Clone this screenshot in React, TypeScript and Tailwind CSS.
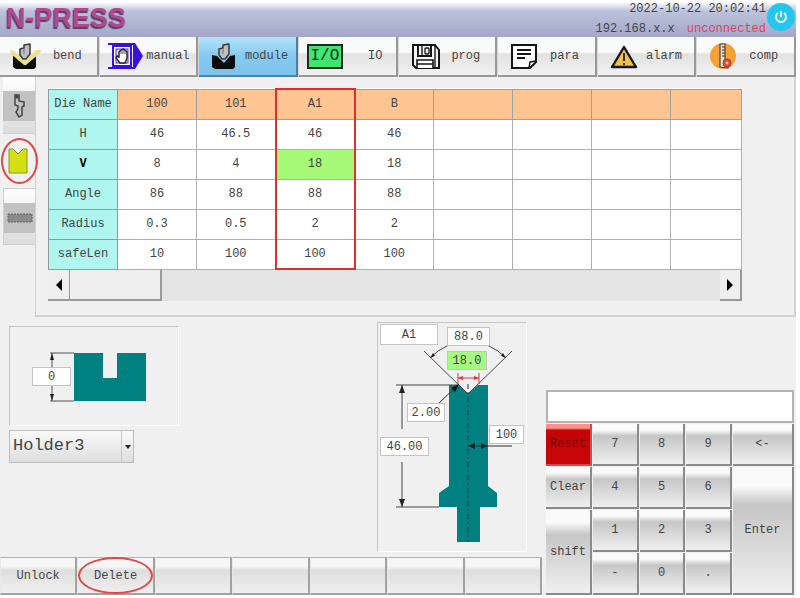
import React, { useState } from 'react';

const PunchIcon: React.FC<{ bent?: boolean }> = ({ bent }) => (
  <svg width="30" height="28" viewBox="0 0 30 28" overflow="visible">
    <path d="M1 13 L6 14 L13 21 L19 14 L24 13 V25 L22 27 H4 L1 25 Z" fill="#0c0c0c" />
    {bent && <path d="M-2 8 L2 9 L13 19 L24 8 L29 8 L28 11 L14 23 L12 23 L-1 12 Z" fill="#eee08a" />}
    <path d="M12 3 L18 2 V12 L14 17 L11 17 L8 13 V7 L12 6 Z" fill="#bdbdc2" stroke="#3a3a3a" strokeWidth="1.5" strokeLinejoin="round" />
    <path d="M12 6 V12" stroke="#777" strokeWidth="1" />
  </svg>
);

const ManualIcon = () => (
  <svg width="36" height="28" viewBox="0 0 36 28">
    <path d="M25 1 H27 L35 14 L27 27 H25 Z" fill="#3a10dc" />
    <path d="M0 2 H26 M0 26 H26" stroke="#3a10dc" strokeWidth="2" />
    <rect x="5" y="4" width="18" height="20" fill="#fff" stroke="#3a10dc" strokeWidth="2" />
    <rect x="8" y="7" width="12" height="14" fill="#dcd8f0" stroke="#4c3a9c" strokeWidth="1" />
    <path d="M12 21 L8 16 L9 14 L11 15 V10 L13 8 L15 7 L17 8 L19 10 V16 L17 21 Z" fill="#fff" stroke="#222" strokeWidth="1.4" />
    <path d="M13 9 V12 M15 8 V12 M17 9 V12" stroke="#222" strokeWidth="0.8" />
  </svg>
);

const IoIcon = () => (
  <span className="flex h-[25px] w-9 items-center justify-center border-2 border-[#1c2a20] bg-[#3ee673] font-['Liberation_Mono',monospace] text-base leading-none text-[#0c2c16]">
    I/O
  </span>
);

const ProgIcon = () => (
  <svg width="30" height="28" viewBox="0 0 30 28" fill="none" stroke="#161616" strokeWidth="2">
    <path d="M2 3 H24 L28 8 V26 H5 L2 23 Z" fill="#f4f4f4" />
    <path d="M24 4 V25" strokeWidth="1.4" />
    <path d="M7 3 V14 H20 V3" />
    <path d="M11 3 V13" strokeWidth="1.4" />
    <rect x="14" y="6" width="4" height="6" rx="1" strokeWidth="1.3" />
    <path d="M6 26 V18 H22 V26 M6 22 H22" fill="#fff" strokeWidth="1.6" />
  </svg>
);

const ParaIcon = () => (
  <svg width="28" height="28" viewBox="0 0 28 28" fill="none" stroke="#161616" strokeWidth="2">
    <path d="M2 3 H26 V20 L20 26 H2 Z" fill="#fff" />
    <path d="M26 19 L20 20 L19 26" strokeWidth="1.5" />
    <path d="M7 8 H21 M7 12 H21 M7 16 H15" strokeWidth="1.8" />
  </svg>
);

const AlarmIcon = () => (
  <svg width="28" height="28" viewBox="0 0 28 28">
    <path d="M14 5 L26 25 H2 Z" fill="#f0c04a" stroke="#161616" strokeWidth="2.4" strokeLinejoin="round" />
    <path d="M14 11 V19" stroke="#3c2c10" strokeWidth="2" />
    <circle cx="14" cy="22" r="1.2" fill="#3c2c10" />
  </svg>
);

const CompIcon = () => (
  <svg width="28" height="28" viewBox="0 0 28 28">
    <circle cx="14" cy="14" r="13" fill="#f5a136" />
    <path d="M11 2 H16 V18 L19 20 V26 L11 25 Z" fill="#e4dccb" stroke="#5c4030" strokeWidth="1.2" />
    <path d="M13 5 H16 M13 8 H16 M13 11 H16 M13 14 H16" stroke="#4a3a2a" strokeWidth="1" />
    <circle cx="18" cy="21" r="4" fill="#d8503c" stroke="#a8382c" strokeWidth="1" />
    <circle cx="18" cy="21" r="1.4" fill="#f0c8b8" />
  </svg>
);

const menu: { id: string; icon: React.ReactNode; wide?: boolean }[] = [
  { id: 'bend', icon: <PunchIcon bent /> },
  { id: 'manual', icon: <ManualIcon /> },
  { id: 'module', icon: <PunchIcon /> },
  { id: 'IO', icon: <IoIcon />, wide: true },
  { id: 'prog', icon: <ProgIcon /> },
  { id: 'para', icon: <ParaIcon /> },
  { id: 'alarm', icon: <AlarmIcon /> },
  { id: 'comp', icon: <CompIcon /> },
];

const rows: { label: string; values: string[] }[] = [
  { label: 'H', values: ['46', '46.5', '46', '46'] },
  { label: 'V', values: ['8', '4', '18', '18'] },
  { label: 'Angle', values: ['86', '88', '88', '88'] },
  { label: 'Radius', values: ['0.3', '0.5', '2', '2'] },
  { label: 'safeLen', values: ['10', '100', '100', '100'] },
];

const dieNames = ['100', '101', 'A1', 'B', '', '', '', ''];
const SELECTED = 2;

const keys: { label: string; area?: string }[] = [
  { label: 'Reset' }, { label: '7' }, { label: '8' }, { label: '9' }, { label: '<-' },
  { label: 'Clear' }, { label: '4' }, { label: '5' }, { label: '6' }, { label: 'Enter', area: 'row-span-3' },
  { label: 'shift', area: 'row-span-2' }, { label: '1' }, { label: '2' }, { label: '3' },
  { label: '-' }, { label: '0' }, { label: '.' },
];

const Field: React.FC<{ label: string; value: string; className: string }> = ({ label, value, className }) => (
  <input
    aria-label={label}
    defaultValue={value}
    className={`absolute border border-[#c4c4c4] p-0 text-center text-xs ${className}`}
  />
);

const HolderDrawing = () => (
  <div className="relative h-[100px] w-[170px] border border-b-white border-l-[#c6c6c6] border-r-white border-t-[#c6c6c6]">
    <svg width="168" height="98" viewBox="0 0 168 98">
      <path d="M64 26 H93 V51 H107 V26 H136 V74 H64 Z" fill="#008080" />
      <path d="M40 26 H64 M40 74 H64 M42 26 V74" stroke="#555" fill="none" />
      <path d="M42 26 L40 33 H44 Z M42 74 L40 67 H44 Z" fill="#222" />
    </svg>
    <Field label="Holder height" value="0" className="left-[22px] top-[40px] h-[19px] w-[39px] bg-white" />
  </div>
);

const DieDrawing = () => (
  <div className="relative h-[230px] w-[150px] border border-b-white border-l-[#c6c6c6] border-r-white border-t-[#c6c6c6]">
    <svg width="148" height="228" viewBox="0 0 148 228" fill="none">
      <path
        d="M71 62 H81 L90 71 L100 62 H110 V163 L119 170 V184 H102 V219 H79 V184 H61 V170 L71 163 Z"
        fill="#008080"
      />
      <path d="M46 28 L90 71 L134 28" stroke="#444" />
      <path d="M52 35 A52 52 0 0 1 128 35" stroke="#444" />
      <path d="M52 35 L55 30 L57 33 Z M128 35 L125 30 L123 33 Z" fill="#222" />
      <path d="M90 61 V219" stroke="#1c3c3c" strokeDasharray="5 3 2 3" />
      {/* height */}
      <path d="M18 62 H80 M18 184 H61 M24 62 V106 M24 139 V184" stroke="#444" />
      <path d="M24 62 L21 70 H27 Z M24 184 L21 176 H27 Z" fill="#222" />
      {/* radius */}
      <path d="M80 62 L60 81" stroke="#333" />
      <path d="M81 61 L73 65 L77 69 Z" fill="#111" />
      {/* opening */}
      <path d="M80 50 V61 M101 50 V61 M80 55 H101" stroke="#e03838" />
      <path d="M80 55 L85 53 V57 Z M101 55 L96 53 V57 Z" fill="#e03838" />
      <path d="M90 123 H134" stroke="#333" />
      <path d="M90 123 L97 120 V126 Z M110 123 L103 120 V126 Z" fill="#222" />
    </svg>
    <Field label="Die name" value="A1" className="left-[2px] top-[1px] h-[21px] w-[58px] bg-white" />
    <Field label="Angle" value="88.0" className="left-[69px] top-[4px] h-[19px] w-[43px] bg-white" />
    <Field label="V opening" value="18.0" className="left-[69px] top-[28px] h-[19px] w-[40px] bg-[#a6f985]" />
    <Field label="Radius" value="2.00" className="left-[29px] top-[80px] h-[19px] w-[38px] bg-white" />
    <Field label="Safe length" value="100" className="left-[111px] top-[102px] h-[19px] w-[35px] bg-white" />
    <Field label="Height" value="46.00" className="left-[2px] top-[114px] h-[19px] w-[49px] bg-white" />
  </div>
);

const App: React.FC = () => {
  const [page, setPage] = useState('module');
  const [display, setDisplay] = useState('');

  const pressKey = (label: string) => {
    if (/^[0-9.-]$/.test(label)) setDisplay(display + label);
    if (label === '<-') setDisplay(display.slice(0, -1));
    if (label === 'Clear') setDisplay('');
  };

  return (
    <div className="min-h-screen bg-white pr-1 font-['Liberation_Mono',monospace] text-xs text-[#444]">
      <div className="bg-[#f0f0f0]">
        <header className="flex h-[37px] items-center justify-between bg-linear-to-b from-white from-5% via-[#bcc2da] via-30% to-[#a4a7c8] pl-[6px] pr-px">
          <h1 className="font-['Liberation_Sans',sans-serif] text-[27px] font-bold leading-none text-[#b04a8c] [text-shadow:-1px_2px_1px_#5c3c68]">
            N-PRESS
          </h1>
          <div className="flex items-center gap-px">
            <div className="text-right leading-5">
              <p>2022-10-22 20:02:41</p>
              <p>
                192.168.x.x<span className="pl-3 text-[#e0435c]">unconnected</span>
              </p>
            </div>
            <button aria-label="Power" className="mb-1 flex size-7 items-center justify-center rounded-full bg-[#22c6ee]">
              <svg width="16" height="16" viewBox="0 0 16 16" fill="none" stroke="#e8fbff" strokeWidth="2">
                <path d="M5 4 A5 5 0 1 0 11 4 M8 2 V8" />
              </svg>
            </button>
          </div>
        </header>

        <nav className="grid grid-cols-8 gap-px bg-[#d8d8d8]">
          {menu.map(m => (
            <button
              key={m.id}
              onClick={() => setPage(m.id)}
              className={`flex h-10 items-center border-b-2 border-r-2 pr-1 ${m.id === 'manual' || m.wide ? 'pl-2' : 'pl-3'} ${
                page === m.id
                  ? 'border-[#4a7fa6] bg-linear-to-b from-[#b4e2f8] via-[#84caf0] to-[#7cc2ec]'
                  : 'border-[#989898] bg-linear-to-b from-[#fafafa] from-40% via-[#e2e2e2] via-45% to-[#f2f2f2]'
              }`}
            >
              <span className="shrink-0">{m.icon}</span>
              <span className={`flex-1 text-center ${m.wide ? 'pl-4' : ''}`}>{m.id}</span>
            </button>
          ))}
        </nav>

        <main>
          <div className="flex">
            <div role="tablist" className="flex w-[35px] shrink-0 flex-col pl-[3px]">
              <button role="tab" aria-label="Punch" className="h-[57px] border-b border-[#d0d0d0] bg-linear-to-b from-white to-[#dcdcdc] py-[14px]">
                <span className="flex h-[30px] items-center justify-center bg-[#c2c2c2]">
                  <svg width="16" height="26" viewBox="0 0 16 26" fill="none" stroke="#444" strokeWidth="1.5">
                    <path d="M4 2 H8 V8 L13 9 V13 L11 14 V22 L8 24 L5 19 L7 16 V13 L4 12 Z" />
                    <circle cx="6" cy="4" r="1" />
                  </svg>
                </span>
              </button>
              <button role="tab" aria-selected="true" aria-label="Die" className="relative flex h-[54px] items-center pl-[5px]">
                <svg width="20" height="26" viewBox="0 0 20 26">
                  <path d="M1 1 H5 L10 6 L15 1 H19 V25 H1 Z" fill="#d4e012" stroke="#8b9a20" />
                </svg>
                <span className="absolute -left-[2px] top-[4px] z-10 h-[46px] w-[37px] rounded-[50%] border-2 border-[#e04848]" />
              </button>
              <button role="tab" aria-label="Table" className="h-[57px] border border-r-0 border-[#d0d0d0] bg-linear-to-b from-white to-[#dcdcdc] py-[14px]">
                <span className="flex h-[30px] items-center justify-center bg-[#c2c2c2]">
                  <svg width="26" height="12" viewBox="0 0 26 12">
                    <rect x="1" y="2" width="24" height="8" fill="#8a8a8a" stroke="#666" strokeDasharray="2 1" />
                  </svg>
                </span>
              </button>
            </div>

            <section className="min-w-0 flex-1 border-b-2 border-l border-r-2 border-[#d2d2d2] pb-[14px] pl-3 pr-[52px] pt-[11px]">
              <table className="w-full table-fixed border-collapse bg-white text-center">
                <colgroup>
                  <col className="w-[69px]" />
                  {dieNames.slice(1).map((_, i) => <col key={i} />)}
                  <col className="w-[71px]" />
                </colgroup>
                <thead>
                  <tr className="h-[30px] bg-[#fec592]">
                    <th className="border border-[#8c9c9c] bg-[#aef6ee] p-0 font-normal">Die Name</th>
                    {dieNames.map((name, i) => (
                      <th
                        key={i}
                        className={`border border-[#a0a0a0] p-0 font-normal ${
                          i === SELECTED ? 'border-x-2 border-t-2 border-x-[#dc3030] border-t-[#dc3030]' : ''
                        }`}
                      >
                        {name}
                      </th>
                    ))}
                  </tr>
                </thead>
                <tbody>
                  {rows.map((row, r) => (
                    <tr key={row.label} className="h-[30px]">
                      <th className={`border border-[#8c9c9c] bg-[#aef6ee] p-0 ${row.label === 'V' ? 'font-bold text-black' : 'font-normal'}`}>
                        {row.label}
                      </th>
                      {dieNames.map((_, i) => (
                        <td
                          key={i}
                          className={`border border-[#b0b0b0] p-0 ${i === SELECTED ? 'border-x-2 border-x-[#dc3030]' : ''} ${
                            i === SELECTED && r === rows.length - 1 ? 'border-b-2 border-b-[#dc3030]' : ''
                          } ${i === SELECTED && row.label === 'V' ? 'bg-[#a6fa78]' : ''}`}
                        >
                          {row.values[i]}
                        </td>
                      ))}
                    </tr>
                  ))}
                </tbody>
              </table>
              <div className="flex h-[31px] bg-[#e4e4e4]">
                <button aria-label="Scroll left" className="flex w-[22px] items-center justify-center border-b-2 border-r border-[#999] bg-[#efefef]">
                  <svg width="6" height="12" viewBox="0 0 6 12"><path d="M6 0 V12 L0 6 Z" fill="#000" /></svg>
                </button>
                <div className="w-[92px] border-b-2 border-r-2 border-[#999] bg-[#efefef]" />
                <button aria-label="Scroll right" className="ml-auto flex w-[22px] items-center justify-center border-b-2 border-r-2 border-[#999] bg-[#efefef]">
                  <svg width="6" height="12" viewBox="0 0 6 12"><path d="M0 0 V12 L6 6 Z" fill="#000" /></svg>
                </button>
              </div>
            </section>
          </div>

          <div className="flex gap-1 pr-[2px]">
            <div className="flex min-w-0 flex-1 flex-col justify-between">
              <div className="flex justify-between pl-[9px] pr-[15px] pt-[5px]">
                <div className="flex flex-col gap-1 pt-1">
                  <HolderDrawing />
                  <div className="relative w-[125px]">
                    <select
                      aria-label="Holder"
                      className="h-[33px] w-full appearance-none border border-[#bdbdbd] bg-linear-to-b from-[#fafafa] to-[#dedede] pl-[3px] text-[17px]"
                    >
                      <option>Holder3</option>
                    </select>
                    <span className="pointer-events-none absolute inset-y-px right-px flex w-3 items-center justify-center border-l border-[#c8c8c8]">
                      <svg width="6" height="4" viewBox="0 0 6 4"><path d="M0 0 H6 L3 4 Z" fill="#222" /></svg>
                    </span>
                  </div>
                </div>
                <DieDrawing />
              </div>
              <div className="grid grid-cols-7">
                {['Unlock', 'Delete', '', '', '', '', ''].map((label, i) => (
                  <button
                    key={i}
                    aria-label={label || `Function ${i + 1}`}
                    className="relative h-[38px] border border-b-2 border-r-2 border-[#a2a2a2] border-l-[#e8e8e8] border-t-[#b4b4b4] bg-linear-to-b from-[#f6f6f6] from-25% via-[#dedede] via-35% to-[#efefef]"
                  >
                    {label}
                    {label === 'Delete' && (
                      <span className="absolute -top-px left-0 h-[37px] w-full rounded-[50%] border-2 border-[#e04848]" />
                    )}
                  </button>
                ))}
              </div>
            </div>

            <div className="w-[248px] shrink-0 pt-[73px]">
              <input
                aria-label="Value"
                value={display}
                onChange={e => setDisplay(e.target.value)}
                className="mb-px block h-[33px] w-full border-2 border-[#b4b4b4] bg-white px-2 text-base"
              />
              <div className="grid grid-cols-[46px_1fr_1fr_1fr_61px] gap-px">
                {keys.map(k => (
                  <button
                    key={k.label}
                    onClick={() => pressKey(k.label)}
                    className={`min-h-[42px] border-b-2 border-r-2 ${k.area || ''} ${
                      k.label === 'Reset'
                        ? 'border-[#d84848] bg-linear-to-b from-[#ff9090] from-10% via-[#c40404] via-15% to-[#c80808] text-[#700000]'
                        : 'border-[#8a8a8a] bg-linear-to-b from-[#fafafa] from-15% via-[#c6c6c6] via-30% to-[#f0f0f0]'
                    }`}
                  >
                    {k.label}
                  </button>
                ))}
              </div>
            </div>
          </div>
        </main>
      </div>
    </div>
  );
};

export default App;
